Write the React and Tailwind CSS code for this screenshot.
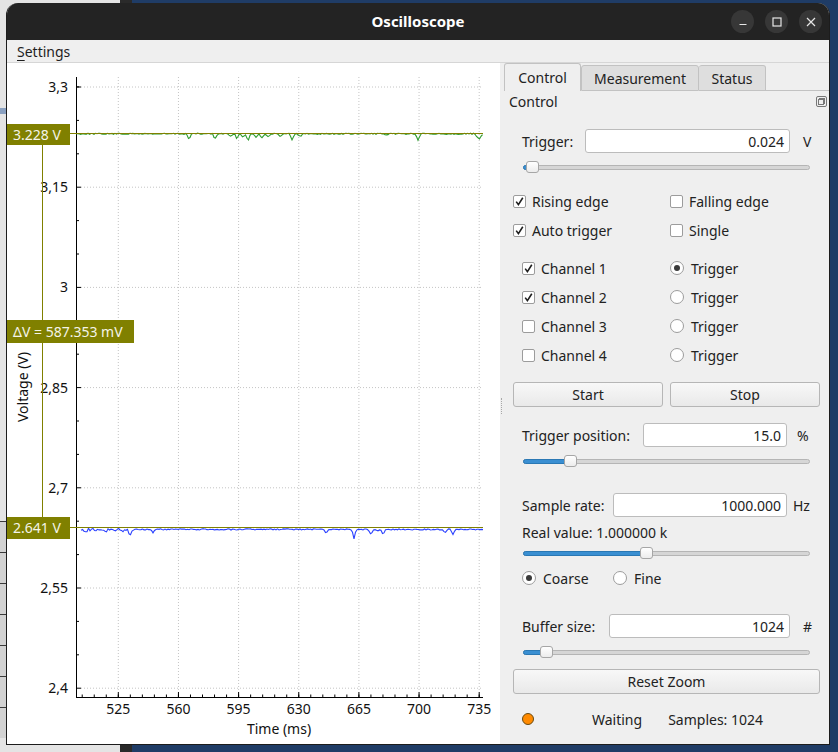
import React from 'react';

// deterministic noise so the traces look the same on every render
function rng(seed) {
  let s = seed;
  return () => {
    s = (s * 1103515245 + 12345) % 2147483648;
    return s / 2147483648;
  };
}

function trace(x0, x1, base, amp, dips, seed, wobbleTo = 0) {
  const r = rng(seed);
  let d = '';
  for (let x = x0; x <= x1; x += 1.5) {
    const a = x < wobbleTo ? amp * 2.6 : amp;
    let y = base + (r() - 0.5) * a;
    for (const [dx, depth, w] of dips) {
      const k = Math.abs(x - dx);
      if (k < w) y += depth * (1 - k / w);
    }
    d += (d ? 'L' : 'M') + x.toFixed(1) + ' ' + y.toFixed(2);
  }
  return d;
}

const GREEN = trace(76, 483, 133.8, 1.2, [
  [189, 6, 2.5], [215, 6, 2.5], [231, 3, 3], [237, 5, 2.5], [243, 3, 3], [248, 8, 2.5],
  [256, 3, 3], [262, 4, 3], [268, 3, 3], [280, 3, 3], [292, 6, 2.5], [300, 3, 3],
  [387, 2, 3], [418, 7, 2.5], [479, 6, 4],
], 7);

const BLUE = trace(81, 483, 529.4, 1.2, [
  [86, 2, 3], [96, 2, 3], [106, 2, 3], [114, 2, 3], [122, 2, 3], [130, 5, 3], [153, 3, 2.5],
  [326, 4, 2.5], [354, 10, 2], [371, 6, 2.5], [378, 2, 3], [383, 5, 2.5], [445, 3, 3], [453, 5, 2.5],
], 19, 135);

const yOf = (v) => 87 + ((3.3 - v) / 0.15) * 100.2;
const xOf = (t) => 118.3 + ((t - 525) / 35) * 60.15;

const yMajor = [3.3, 3.15, 3.0, 2.85, 2.7, 2.55, 2.4];
const yLabels = ['3,3', '3,15', '3', '2,85', '2,7', '2,55', '2,4'];
const xMajor = [525, 560, 595, 630, 665, 700, 735];

function Plot() {
  const yMinor = [];
  for (let i = 0; i < 6; i++) {
    yMinor.push(yOf(yMajor[i]) + 33.4, yOf(yMajor[i]) + 66.8);
  }
  yMinor.push(yOf(3.3) - 0.1);
  const xMinor = [];
  for (let t = 504; t <= 737; t += 7) xMinor.push(xOf(t));

  return (
    <svg width="493" height="681" viewBox="7 63 493 681" className="block">
      <rect x="7" y="63" width="493" height="681" fill="#ffffff" />
      {/* grid */}
      {yMajor.map((v) => (
        <line key={'gh' + v} x1="81" x2="483" y1={yOf(v)} y2={yOf(v)} stroke="#c4c4c4" strokeDasharray="1 2" />
      ))}
      {xMajor.map((t) => (
        <line key={'gv' + t} x1={xOf(t)} x2={xOf(t)} y1="77" y2="692" stroke="#c4c4c4" strokeDasharray="1 2" />
      ))}
      {/* axes */}
      <line x1="76.5" x2="76.5" y1="77" y2="697" stroke="#000" />
      <line x1="76" x2="483" y1="697.5" y2="697.5" stroke="#000" />
      {yMajor.map((v) => (
        <line key={'ty' + v} x1="76" x2="81" y1={yOf(v)} y2={yOf(v)} stroke="#000" />
      ))}
      {yMinor.map((y, i) => (
        <line key={'tmy' + i} x1="76" x2="79" y1={y} y2={y} stroke="#000" />
      ))}
      {xMajor.map((t) => (
        <line key={'tx' + t} x1={xOf(t)} x2={xOf(t)} y1="692" y2="697" stroke="#000" />
      ))}
      {xMinor.map((x, i) => (
        <line key={'tmx' + i} x1={x} x2={x} y1="694.5" y2="697" stroke="#000" />
      ))}
      {/* tick labels */}
      <g fontFamily="'Noto Sans', sans-serif" fontSize="14" fill="#111">
        {yMajor.map((v, i) => (
          <text key={'ly' + v} x="68" y={yOf(v) + 5} textAnchor="end">{yLabels[i]}</text>
        ))}
        {xMajor.map((t) => (
          <text key={'lx' + t} x={xOf(t)} y="714" textAnchor="middle">{t}</text>
        ))}
        <text x="279" y="734" textAnchor="middle">Time (ms)</text>
        <text x="28" y="387" textAnchor="middle" transform="rotate(-90 28 387)">Voltage (V)</text>
      </g>
      {/* traces */}
      <path d={GREEN} fill="none" stroke="#2f9d2f" strokeWidth="1.1" />
      <path d={BLUE} fill="none" stroke="#2a40ff" strokeWidth="1.1" />
      {/* cursors */}
      <line x1="7" x2="483" y1="133.5" y2="133.5" stroke="#808000" strokeWidth="1.2" />
      <line x1="7" x2="483" y1="527.5" y2="527.5" stroke="#808000" strokeWidth="1.2" />
      <line x1="42.5" x2="42.5" y1="145" y2="517" stroke="#808000" />
      <g fontFamily="'Noto Sans', sans-serif" fontSize="14" fill="#f4f4e8">
        <rect x="7" y="124" width="63" height="21" fill="#808000" />
        <text x="13" y="139.5">3.228 V</text>
        <rect x="7" y="320" width="127" height="23" fill="#808000" />
        <text x="13" y="336.5">ΔV = 587.353 mV</text>
        <rect x="7" y="517" width="63" height="22" fill="#808000" />
        <text x="13" y="533">2.641 V</text>
      </g>
    </svg>
  );
}

function Check({ checked }) {
  return (
    <span className="flex h-[13px] w-[13px] shrink-0 items-center justify-center rounded-[2px] border border-[#9c9c9c] bg-white">
      {checked && (
        <svg width="11" height="11" viewBox="0 0 11 11">
          <path d="M2.2 5.6 L4.4 8.6 L8.8 1.8" fill="none" stroke="#1e1e1e" strokeWidth="1.6" />
        </svg>
      )}
    </span>
  );
}

function Radio({ checked }) {
  return (
    <span className="flex h-[14px] w-[14px] shrink-0 items-center justify-center rounded-full border border-[#9c9c9c] bg-white">
      {checked && <span className="h-[6px] w-[6px] rounded-full bg-[#3a3a3a]" />}
    </span>
  );
}

function Slider({ pos }) {
  return (
    <div className="relative ml-[10px] flex h-[12px] w-[287px] items-center">
      <div className="h-[5px] w-full rounded-full border border-[#b5b5b5] bg-[#d6d6d6]" />
      <div className="absolute left-0 h-[5px] rounded-full border border-[#2a78b4] bg-[#3a8fd2]" style={{ width: pos + 6 }} />
      <div
        className="absolute top-0 h-[12px] w-[13px] rounded-[3px] border border-[#a6a6a6] bg-gradient-to-b from-white to-[#ececec]"
        style={{ left: pos }}
      />
    </div>
  );
}

function Field({ label, labelW, value, inputW, unit, unitGap }) {
  return (
    <div className="flex h-[24px] items-center pl-[9px]">
      <span className="shrink-0" style={{ width: labelW }}>{label}</span>
      <div
        className="flex h-[24px] shrink-0 items-center justify-end rounded-[3px] border border-[#bcbcbc] bg-white pr-[5px]"
        style={{ width: inputW }}
      >
        {value}
      </div>
      <span style={{ marginLeft: unitGap }}>{unit}</span>
    </div>
  );
}

function Button({ children, className = '' }) {
  return (
    <div
      className={
        'flex h-[25px] items-center justify-center rounded-[3px] border border-[#b6b6b6] bg-gradient-to-b from-[#f8f8f8] to-[#e9e9e9] ' +
        className
      }
    >
      {children}
    </div>
  );
}

function Panel() {
  return (
    <div className="relative flex h-full w-[329px] flex-col bg-[#efefef] text-[14px] text-[#222]">
      {/* splitter handle */}
      <div className="absolute left-[1px] top-[335px] h-[16px] border-l border-dotted border-[#a8a8a8]" />

      {/* tabs */}
      <div className="flex h-[28px] items-end pl-[4px]">
        <div className="flex h-[28px] w-[77px] items-center justify-center rounded-t-[3px] border border-b-0 border-[#c2c2c2] bg-[#efefef]">
          Control
        </div>
        <div className="flex h-[26px] w-[118px] items-center justify-center rounded-t-[3px] border border-[#c2c2c2] bg-[#dedede]">
          Measurement
        </div>
        <div className="flex h-[26px] w-[67px] items-center justify-center rounded-t-[3px] border border-l-0 border-[#c2c2c2] bg-[#dedede]">
          Status
        </div>
        <div className="h-px flex-1 bg-[#c2c2c2]" />
      </div>

      {/* dock title */}
      <div className="flex h-[20px] items-center justify-between pl-[9px] pr-[2px]">
        <span>Control</span>
        <svg width="11" height="11" viewBox="0 0 11 11">
          <rect x="0.5" y="0.5" width="10" height="10" rx="1.5" fill="none" stroke="#777" />
          <rect x="3.5" y="2.5" width="5" height="5" fill="none" stroke="#777" />
          <rect x="2.5" y="3.5" width="5" height="5" fill="#efefef" stroke="#777" />
        </svg>
      </div>

      <div className="flex flex-col pl-[13px] pr-[9px]">
        <div className="mt-[18px]">
          <Field label="Trigger:" labelW={63} value="0.024" inputW={205} unit="V" unitGap={13} />
        </div>
        <div className="mt-[8px]">
          <Slider pos={3} />
        </div>

        <div className="mt-[18px] flex h-[20px] items-center">
          <div className="flex w-[157px] items-center gap-[6px]">
            <Check checked />
            <span>Rising edge</span>
          </div>
          <div className="flex items-center gap-[6px]">
            <Check />
            <span>Falling edge</span>
          </div>
        </div>
        <div className="mt-[9px] flex h-[20px] items-center">
          <div className="flex w-[157px] items-center gap-[6px]">
            <Check checked />
            <span>Auto trigger</span>
          </div>
          <div className="flex items-center gap-[6px]">
            <Check />
            <span>Single</span>
          </div>
        </div>

        <div className="mt-[18px] flex flex-col gap-[9px]">
          {[1, 2, 3, 4].map((n) => (
            <div key={n} className="flex h-[20px] items-center">
              <div className="flex w-[157px] items-center gap-[6px] pl-[9px]">
                <Check checked={n <= 2} />
                <span>Channel {n}</span>
              </div>
              <div className="flex items-center gap-[7px]">
                <Radio checked={n === 1} />
                <span>Trigger</span>
              </div>
            </div>
          ))}
        </div>

        <div className="mt-[17px] flex gap-[7px]">
          <Button className="w-[150px]">Start</Button>
          <Button className="w-[150px]">Stop</Button>
        </div>

        <div className="mt-[16px]">
          <Field label="Trigger position:" labelW={121} value="15.0" inputW={144} unit="%" unitGap={10} />
        </div>
        <div className="mt-[8px]">
          <Slider pos={41} />
        </div>

        <div className="mt-[26px]">
          <Field label="Sample rate:" labelW={91} value="1000.000" inputW={174} unit="Hz" unitGap={6} />
        </div>
        <div className="mt-[6px] flex h-[18px] items-center pl-[9px]">Real value: 1.000000 k</div>
        <div className="mt-[6px]">
          <Slider pos={117} />
        </div>
        <div className="mt-[9px] flex h-[20px] items-center pl-[9px]">
          <div className="flex w-[91px] items-center gap-[7px]">
            <Radio checked />
            <span>Coarse</span>
          </div>
          <div className="flex items-center gap-[7px]">
            <Radio />
            <span>Fine</span>
          </div>
        </div>

        <div className="mt-[26px]">
          <Field label="Buffer size:" labelW={87} value="1024" inputW={181} unit="#" unitGap={13} />
        </div>
        <div className="mt-[8px]">
          <Slider pos={17} />
        </div>

        <Button className="mt-[11px] h-[24px] w-[307px]">Reset Zoom</Button>

        <div className="mt-[15px] flex h-[20px] items-center pl-[9px]">
          <span className="h-[12px] w-[12px] rounded-full border border-[#6a4a10] bg-[#ff8a00]" />
          <span className="ml-[58px]">Waiting</span>
          <span className="ml-[26px]">Samples: 1024</span>
        </div>
      </div>
    </div>
  );
}

function TitleButton({ children }) {
  return (
    <div className="flex h-[23px] w-[23px] items-center justify-center rounded-full bg-[#373737]">{children}</div>
  );
}

export default function App() {
  return (
    <div className="relative h-[752px] w-[838px] overflow-hidden bg-[#1f3c66] font-['Noto_Sans',sans-serif]">
      {/* window behind, on the left */}
      <div className="absolute left-0 top-0 flex h-[752px] w-[132px] flex-col border-r-[12px] border-[#2a2a2a] bg-[#e4e4e4]">
        <div className="mt-[108px] h-[6px] w-[6px] bg-[#8aa0c0]" />
        <div className="mt-[407px] flex flex-col">
          {[0, 1, 2, 3, 4, 5, 6].map((i) => (
            <div key={i} className="h-[31px] border-t border-[#3a3a3a] bg-[#d2d2d2]" />
          ))}
        </div>
      </div>

      {/* oscilloscope window */}
      <div className="relative ml-[6px] mt-[3px] flex h-[742px] w-[824px] flex-col overflow-hidden rounded-t-[12px] border-x border-b border-[#1c1c1c] bg-[#efefef]">
        <div className="grid h-[37px] shrink-0 grid-cols-[1fr_auto_1fr] items-center bg-[#232323]">
          <div />
          <div className="text-[15px] font-bold text-white">Oscilloscope</div>
          <div className="flex items-center justify-end gap-[11px] pr-[7px]">
            <TitleButton>
              <svg width="10" height="10" viewBox="0 0 10 10">
                <path d="M1.5 7.5 H8.5" stroke="#e6e6e6" strokeWidth="1.2" />
              </svg>
            </TitleButton>
            <TitleButton>
              <svg width="10" height="10" viewBox="0 0 10 10">
                <rect x="1" y="1" width="8" height="8" fill="none" stroke="#e6e6e6" strokeWidth="1.2" />
              </svg>
            </TitleButton>
            <TitleButton>
              <svg width="10" height="10" viewBox="0 0 10 10">
                <path d="M1 1 L9 9 M9 1 L1 9" stroke="#e6e6e6" strokeWidth="1.2" />
              </svg>
            </TitleButton>
          </div>
        </div>

        <div className="flex h-[23px] shrink-0 items-center border-b border-[#d6d6d6] bg-[#efefef] pl-[10px] text-[14px] text-[#1e1e1e]">
          <span>
            <span className="underline underline-offset-[3px]">S</span>ettings
          </span>
        </div>

        <div className="flex flex-1">
          <Plot />
          <Panel />
        </div>
      </div>
    </div>
  );
}
